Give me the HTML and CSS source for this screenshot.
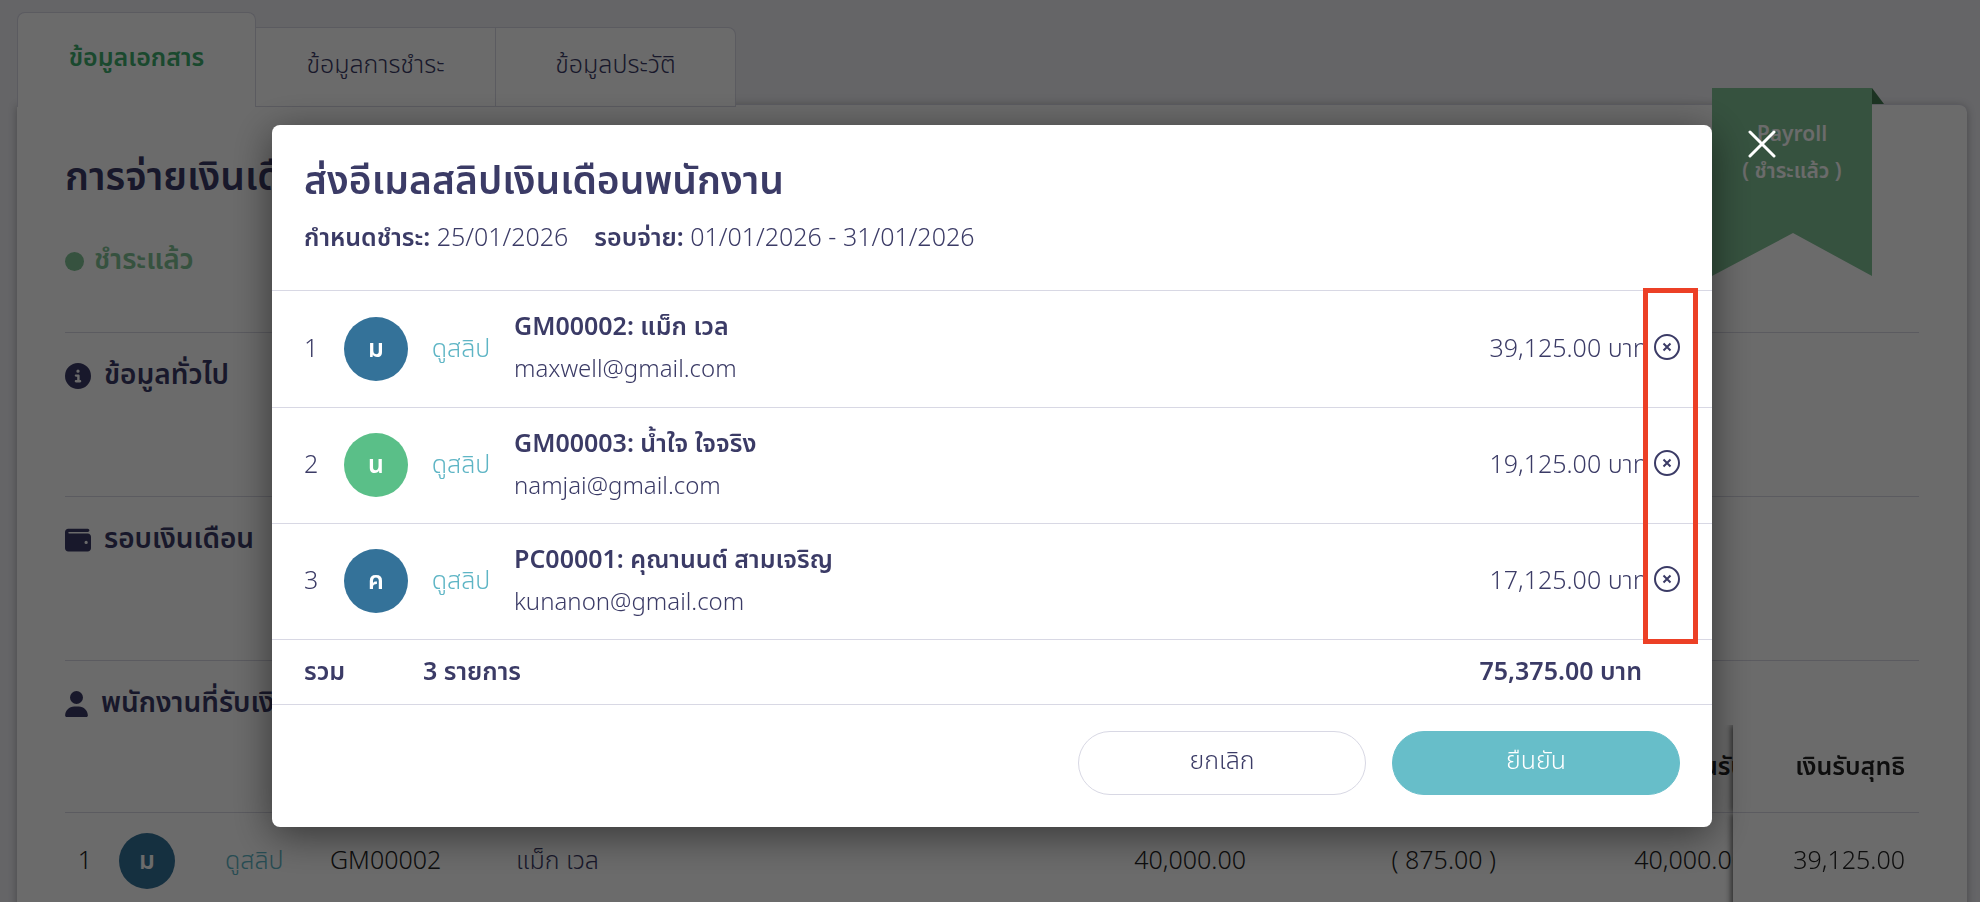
FILE: index.html
```html
<!DOCTYPE html>
<html lang="th">
<head>
<meta charset="utf-8">
<title>การจ่ายเงินเดือน</title>
<link rel="stylesheet" href="styles.css">
</head>
<body>
<main class="page">
  <nav class="tabs">
    <a class="tab tab-active" href="#doc">ข้อมูลเอกสาร</a>
    <a class="tab" href="#pay">ข้อมูลการชำระ</a>
    <a class="tab tab-last" href="#history">ข้อมูลประวัติ</a>
  </nav>
  <section class="card">
    <div class="ribbon">
      <svg class="ribbon-shape" width="172" height="188" viewBox="0 0 172 188" aria-hidden="true"><path d="M160 0l12 16h-12z" fill="#437a51"/><path d="M0 0h160v188l-79-43-81 43z" fill="#81c396"/></svg>
      <p class="ribbon-text">Payroll<br>( ชำระแล้ว )</p>
    </div>
    <header class="intro">
      <h1 class="page-title">การจ่ายเงินเดือน</h1>
      <p class="status"><span class="dot"></span>ชำระแล้ว</p>
    </header>
    <section class="block">
      <h2 class="block-title"><svg width="26" height="26" viewBox="0 0 512 512" aria-hidden="true"><path fill="currentColor" d="M256 512A256 256 0 1 0 256 0a256 256 0 1 0 0 512zM216 336l24 0 0-64-24 0c-13.300 0-24-10.700-24-24s10.700-24 24-24l48 0c13.300 0 24 10.700 24 24l0 88 8 0c13.300 0 24 10.700 24 24s-10.700 24-24 24l-80 0c-13.300 0-24-10.700-24-24s10.700-24 24-24zm40-208a32 32 0 1 1 0 64 32 32 0 1 1 0-64z"/></svg>ข้อมูลทั่วไป</h2>
    </section>
    <section class="block">
      <h2 class="block-title"><svg width="26" height="26" viewBox="0 0 512 512" aria-hidden="true"><path fill="currentColor" d="M64 32C28.700 32 0 60.700 0 96L0 416c0 35.300 28.700 64 64 64l384 0c35.300 0 64-28.700 64-64l0-224c0-35.300-28.700-64-64-64L80 128c-8.800 0-16-7.200-16-16s7.200-16 16-16l368 0c17.700 0 32-14.300 32-32s-14.300-32-32-32L64 32zM416 272a32 32 0 1 1 0 64 32 32 0 1 1 0-64z"/></svg>รอบเงินเดือน</h2>
    </section>
    <section class="block block-list">
      <h2 class="block-title"><svg width="23" height="26" viewBox="0 0 448 512" aria-hidden="true"><path fill="currentColor" d="M224 256A128 128 0 1 0 224 0a128 128 0 1 0 0 256zm-45.700 48C79.800 304 0 383.800 0 482.300C0 498.700 13.300 512 29.700 512l388.600 0c16.400 0 29.700-13.300 29.700-29.700C448 383.800 368.200 304 269.700 304l-91.400 0z"/></svg>พนักงานที่รับเงิน</h2>
      <div class="table-wrap">
        <table class="pay-table">
          <colgroup><col class="c-no"><col class="c-avatar"><col class="c-slip"><col class="c-code"><col class="c-name"><col class="c-money"><col class="c-money"><col class="c-money"><col class="c-net"></colgroup>
          <thead><tr><th></th><th></th><th></th><th></th><th></th><th></th><th></th><th class="num">รวมเงินรับ</th><th class="num net">เงินรับสุทธิ</th></tr></thead>
          <tbody><tr>
            <td class="center">1</td>
            <td><span class="avatar avatar-sm">ม</span></td>
            <td><a class="slip" href="#slip">ดูสลิป</a></td>
            <td>GM00002</td>
            <td class="person">แม็ก เวล</td>
            <td class="num">40,000.00</td>
            <td class="num">( 875.00 )</td>
            <td class="num">40,000.00</td>
            <td class="num net">39,125.00</td>
          </tr></tbody>
        </table>
      </div>
    </section>
  </section>
</main>

<div class="overlay">
  <div class="modal" role="dialog" aria-labelledby="dlg-title">
    <button class="close" type="button" aria-label="ปิด"><svg width="28" height="28" viewBox="0 0 28 28" aria-hidden="true"><path d="M2 2l24 24M26 2L2 26" fill="none" stroke="#fff" stroke-width="3" stroke-linecap="round"/></svg></button>
    <header class="modal-head">
      <h2 class="modal-title" id="dlg-title">ส่งอีเมลสลิปเงินเดือนพนักงาน</h2>
      <p class="meta"><span><b>กำหนดชำระ:</b> 25/01/2026</span><span><b>รอบจ่าย:</b> 01/01/2026 - 31/01/2026</span></p>
    </header>
    <div class="list-area">
      <ul class="list">
        <li class="row">
          <span>1</span><span class="avatar">ม</span><a class="slip" href="#slip1">ดูสลิป</a>
          <div><p class="name">GM00002: แม็ก เวล</p><p class="mail">maxwell@gmail.com</p></div>
          <span>39,125.00 บาท</span>
          <button class="remove" type="button" aria-label="ลบ"><svg width="26" height="26" viewBox="0 0 26 26" aria-hidden="true"><circle cx="13" cy="13" r="12"/><path d="M9.500 9.500l7 7M16.500 9.500l-7 7"/></svg></button>
        </li>
        <li class="row">
          <span>2</span><span class="avatar avatar-green">น</span><a class="slip" href="#slip2">ดูสลิป</a>
          <div><p class="name">GM00003: น้ำใจ ใจจริง</p><p class="mail">namjai@gmail.com</p></div>
          <span>19,125.00 บาท</span>
          <button class="remove" type="button" aria-label="ลบ"><svg width="26" height="26" viewBox="0 0 26 26" aria-hidden="true"><circle cx="13" cy="13" r="12"/><path d="M9.500 9.500l7 7M16.500 9.500l-7 7"/></svg></button>
        </li>
        <li class="row">
          <span>3</span><span class="avatar">ค</span><a class="slip" href="#slip3">ดูสลิป</a>
          <div><p class="name">PC00001: คุณานนต์ สามเจริญ</p><p class="mail">kunanon@gmail.com</p></div>
          <span>17,125.00 บาท</span>
          <button class="remove" type="button" aria-label="ลบ"><svg width="26" height="26" viewBox="0 0 26 26" aria-hidden="true"><circle cx="13" cy="13" r="12"/><path d="M9.500 9.500l7 7M16.500 9.500l-7 7"/></svg></button>
        </li>
      </ul>
      <div class="highlight"></div>
    </div>
    <div class="total"><span>รวม</span><span>3 รายการ</span><span>75,375.00 บาท</span></div>
    <footer class="actions">
      <button class="btn btn-cancel" type="button">ยกเลิก</button>
      <button class="btn btn-ok" type="button">ยืนยัน</button>
    </footer>
  </div>
</div>
</body>
</html>
```
FILE: styles.css
```css
* { box-sizing: border-box; }
body {
  margin: 0;
  background: #f0f0f5;
  color: #3b3b66;
  font-family: "Noto Sans Thai", "Noto Sans", "Open Sans", sans-serif;
  font-size: 25px;
  font-weight: 360;
  line-height: 32px;
}
h1, h2, p, ul { margin: 0; padding: 0; font-weight: inherit; }
a { color: inherit; text-decoration: none; }
button { font: inherit; color: inherit; cursor: pointer; padding: 0; }
b { font-weight: 600; }

.page { display: flex; flex-direction: column; height: 100vh; overflow: hidden; padding: 12px 13px 0 17px; }
.tabs { display: flex; flex: none; align-items: flex-end; position: relative; z-index: 1; margin-bottom: -2px; }
.tab {
  display: flex; align-items: center; justify-content: center;
  width: 240px; height: 80px; padding-bottom: 4px;
  background: #fff; border: 1px solid #d8d8e4; border-left: 0;
}
.tab-active {
  width: 239px; height: 95px; font-weight: 600; color: #3fae6e;
  border-left: 1px solid #d8d8e4; border-bottom: 0; border-radius: 8px 8px 0 0;
}
.tab-last { border-radius: 0 8px 0 0; }
.card {
  position: relative;
  flex: 1 0 auto;
  margin-top: -1px;
  padding: 0 48px;
  background: #fff;
  border-top: 1px solid #d8d8e4;
  border-radius: 0 8px 0 0;
  box-shadow: 0 2px 8px rgba(0, 0, 0, .3);
}
.ribbon { position: absolute; top: -17px; right: 83px; width: 172px; }
.ribbon-shape { display: block; }
.ribbon-text {
  position: absolute; top: 28px; left: 0; width: 160px;
  text-align: center; color: #fff; font-size: 21px; font-weight: 600; line-height: 37px;
}
.intro { height: 227px; padding-top: 46px; }
.page-title { font-size: 39px; font-weight: 600; line-height: 56px; }
.status {
  display: flex; align-items: center; gap: 10px;
  margin-top: 38px; font-size: 28px; font-weight: 600; color: #81c396;
}
.dot { width: 19px; height: 19px; border-radius: 50%; background: currentColor; }
.block { height: 164px; padding-top: 22px; border-top: 1px solid #d8d8e4; }
.block-title {
  display: flex; align-items: center; gap: 13px;
  font-size: 28px; font-weight: 600; line-height: 42px;
}
.block-list { height: auto; }
.table-wrap { overflow: hidden; }
.pay-table { width: calc(100% + 27px); border-collapse: separate; border-spacing: 0; table-layout: fixed; color: #222; }
.pay-table th { height: 88px; padding: 0 14px 4px; font-weight: 600; border-bottom: 1px solid #d8d8e4; }
.pay-table td { height: 95px; padding: 0 14px 0 0; }
.pay-table .num { text-align: right; white-space: nowrap; }
.pay-table .center { text-align: center; }
.pay-table .person { color: #3b3b66; }
.pay-table .net {
  position: sticky; right: 0; background: #fff;
  box-shadow: -2px 0 6px rgba(0, 0, 0, .6); clip-path: inset(0 0 0 -12px);
}
.c-no { width: 54px; }
.c-avatar { width: 106px; }
.c-slip { width: 105px; }
.c-code { width: 186px; }
.c-money { width: 250px; }
.c-net { width: 186px; }

.avatar {
  display: flex; align-items: center; justify-content: center;
  width: 64px; height: 64px; border-radius: 50%;
  background: #347299; color: #fff; font-weight: 600;
}
.avatar-sm { width: 56px; height: 56px; }
.avatar-green { background: #5abf88; }
.slip { color: #5eb5c5; }

.overlay {
  position: fixed; inset: 0; z-index: 10;
  padding: 125px 268px 0 272px;
  background: rgba(0, 0, 0, .58);
}
.modal { position: relative; background: #fff; border-radius: 8px; box-shadow: 0 8px 40px rgba(0, 0, 0, .5); }
.close { position: absolute; top: 5px; right: -64px; width: 28px; height: 28px; background: none; border: 0; }
.close svg, .remove svg { display: block; }
.modal-head { height: 165px; padding: 30px 32px 0; }
.modal-title { font-size: 39px; font-weight: 600; line-height: 56px; }
.meta { display: flex; gap: 26px; margin-top: 11px; }
.list-area { position: relative; border-bottom: 1px solid #d8d8e4; }
.list { list-style: none; }
.row {
  display: grid; grid-template-columns: 40px 64px 106px 1fr auto 32px; align-items: center;
  height: 116px; padding: 0 32px 1px; border-top: 1px solid #d8d8e4;
}
.row:first-child { height: 117px; }
.row .slip { text-align: center; }
.name { font-weight: 600; }
.mail { margin-top: 11px; font-size: 24px; }
.remove { justify-self: end; width: 26px; padding-bottom: 4px; border: 0; background: none; }
.remove svg { fill: none; stroke: #3b3b66; stroke-width: 2; }
.highlight { position: absolute; top: -2px; right: 14px; bottom: -5px; width: 55px; border: 5px solid #ec4026; pointer-events: none; }
.total {
  display: grid; grid-template-columns: 119px 1fr auto; align-items: center;
  height: 65px; padding: 0 70px 0 32px; font-weight: 600; border-bottom: 1px solid #d8d8e4;
}
.actions { display: flex; justify-content: flex-end; gap: 26px; padding: 26px 32px 32px; }
.btn { width: 288px; height: 64px; padding-bottom: 4px; border: 1px solid #d8d8e4; border-radius: 32px; background: #fff; }
.btn-ok { background: #67bec9; border-color: #67bec9; color: #fff; }
```
